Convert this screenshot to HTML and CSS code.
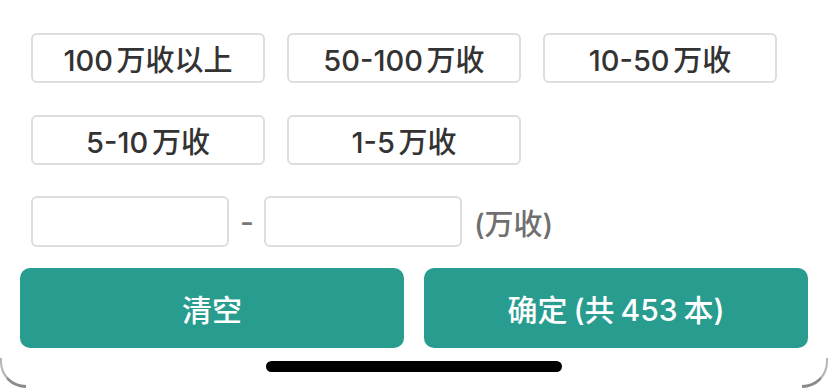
FILE: index.html
```html
<!DOCTYPE html>
<html lang="zh-CN">
<head>
    <meta charset="UTF-8">
    <meta name="viewport" content="width=device-width, initial-scale=1.0">
    <title>字数筛选</title>
    <link rel="stylesheet" href="styles.css">
</head>
<body>
    <div class="sheet">
        <div class="tags">
            <div class="tag">100 万收以上</div>
            <div class="tag">50-100 万收</div>
            <div class="tag">10-50 万收</div>
            <div class="tag">5-10 万收</div>
            <div class="tag">1-5 万收</div>
        </div>
        <div class="range">
            <input class="range-input" type="text">
            <span class="dash">-</span>
            <input class="range-input" type="text">
            <span class="unit">(万收)</span>
        </div>
        <div class="actions">
            <button class="btn">清空</button>
            <button class="btn">确定 (共 453 本)</button>
        </div>
        <div class="home-bar"></div>
        <div class="corner corner-left"></div>
        <div class="corner corner-right"></div>
    </div>
</body>
</html>
```

FILE: styles.css
```css
* {
    box-sizing: border-box;
    padding: 0;
    margin: 0;
}

body {
    font-family: Inter, "Noto Sans CJK SC", sans-serif;
    background-color: #ffffff;
    color: #333333;
    width: 828px;
    height: 388px;
    overflow: hidden;
}

.sheet {
    position: relative;
    height: 388px;
    padding-top: 33px;
}

.tags {
    display: grid;
    grid-template-columns: repeat(3, 234px);
    column-gap: 22px;
    row-gap: 32px;
    padding-left: 31px;
}

.tag {
    height: 50px;
    border: 2px solid #dddddd;
    border-radius: 6px;
    display: flex;
    justify-content: center;
    align-items: center;
    font-size: 29px;
    font-weight: 500;
    word-spacing: -4px;
    color: #333333;
}

.range {
    display: flex;
    align-items: center;
    margin-top: 31px;
    padding-left: 31px;
    height: 51px;
}

.range-input {
    width: 198px;
    height: 51px;
    border: 2px solid #dddddd;
    border-radius: 6px;
    outline: none;
    background: #ffffff;
}

.dash {
    margin: 0 10px 0 11px;
    font-size: 30px;
    font-weight: 500;
    color: #777777;
}

.unit {
    margin-left: 12px;
    font-size: 29px;
    font-weight: 500;
    color: #6f6f6f;
}

.actions {
    display: flex;
    gap: 20px;
    margin-top: 21px;
    padding: 0 20px;
}

.btn {
    flex: 1;
    height: 80px;
    border: none;
    border-radius: 10px;
    background-color: #289d8f;
    color: #ffffff;
    font-family: inherit;
    font-size: 30px;
    font-weight: 500;
    word-spacing: -2px;
}

.home-bar {
    width: 296px;
    height: 11px;
    margin: 13px auto 0;
    border-radius: 6px;
    background-color: #000000;
}

.corner {
    position: absolute;
    bottom: 0;
    width: 26px;
    height: 30px;
    border-bottom: 3px solid #8a8a8a;
}

.corner-left {
    left: 0;
    border-left: 2px solid #b5b5b5;
    border-bottom-left-radius: 26px;
}

.corner-right {
    right: 0;
    border-right: 2px solid #b5b5b5;
    border-bottom-right-radius: 26px;
}
```
